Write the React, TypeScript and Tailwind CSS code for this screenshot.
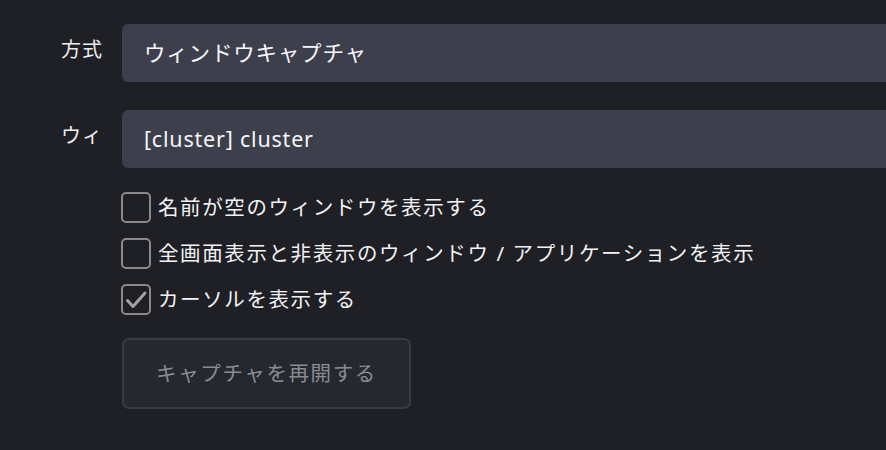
const font = { fontFamily: '"Noto Sans", "Noto Sans CJK JP", sans-serif' };

function Checkbox({ label, checked }: { label: string; checked?: boolean }) {
  return (
    <label className="flex items-center gap-[7px] h-[31px]">
      <span className="flex items-center justify-center w-[30px] h-[31px] rounded-[5px] border-2 border-[#8a8a8e] shrink-0">
        {checked && (
          <svg viewBox="0 0 24 24" className="w-[24px] h-[24px]" fill="none" stroke="#a3a3a6" strokeWidth="3" strokeLinecap="round" strokeLinejoin="round">
            <path d="M3.5 12.5l5.5 6L21 5" />
          </svg>
        )}
      </span>
      <span className="text-[20.5px] text-[#f2f2f4] whitespace-nowrap tracking-[1.6px]">{label}</span>
    </label>
  );
}

function Field({ label, value, mt }: { label: string; value: string; mt: string }) {
  return (
    <div className={`flex items-center ${mt}`}>
      <div className="w-[44px] shrink-0 ml-[61px] mr-[17px] whitespace-nowrap text-[20px] tracking-[1px] text-[#ececee] -mt-[6px]">
        {label}
      </div>
      <div className="w-[900px] h-[58px] shrink-0 rounded-[6px] bg-[#3e3f4d] flex items-center pl-[22px] text-[21.5px] text-[#f6f6f8] tracking-[0.8px]">
        {value}
      </div>
    </div>
  );
}

export default function App() {
  return (
    <div className="w-[886px] h-[450px] overflow-hidden bg-[#1f2026]" style={font}>
      <div className="pt-[24px]">
        <Field label="方式" value="ウィンドウキャプチャ" mt="mt-0" />
        <Field label="ウィ" value="[cluster] cluster" mt="mt-[28px]" />

        <div className="ml-[121px] mt-[24px] flex flex-col gap-[15px]">
          <Checkbox label="名前が空のウィンドウを表示する" />
          <Checkbox label="全画面表示と非表示のウィンドウ / アプリケーションを表示" />
          <Checkbox label="カーソルを表示する" checked />
        </div>

        <button className="ml-[122px] mt-[23px] w-[289px] h-[71px] rounded-[7px] border-2 border-[#393a46] bg-[#262830] text-[20.5px] text-[#8b8c92] tracking-[1.6px] flex items-center justify-center">
          キャプチャを再開する
        </button>
      </div>
    </div>
  );
}
